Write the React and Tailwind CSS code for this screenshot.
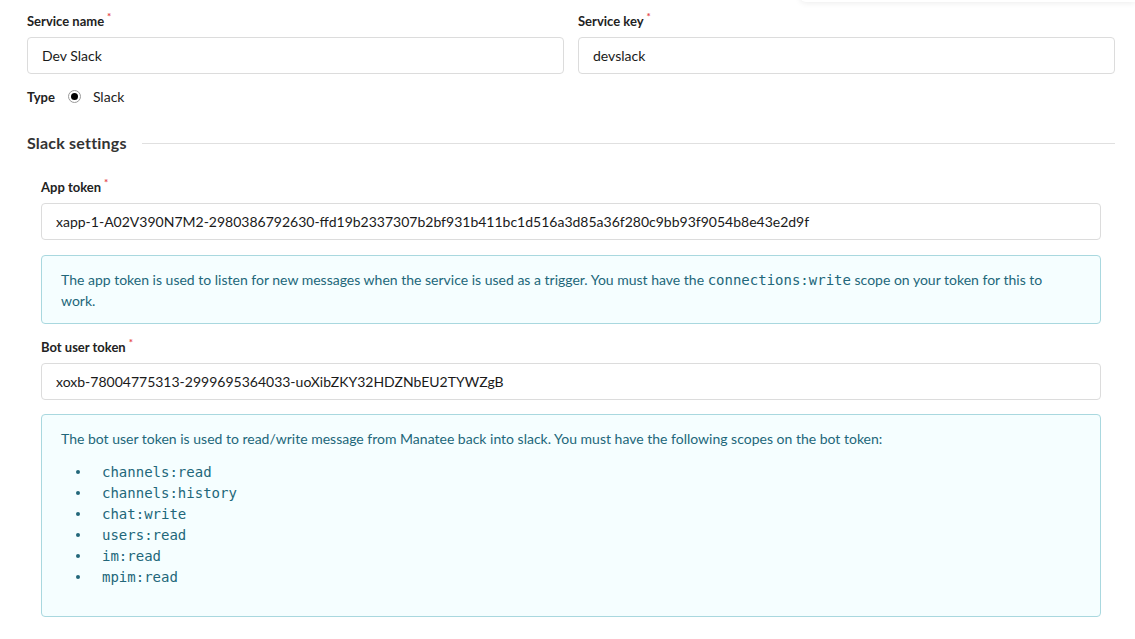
const Label = ({ children }) => (
  <label className="flex items-start text-[13px] font-bold text-[#222] leading-4 mb-[8px]">
    {children}
    <span className="text-[#e5484d] text-[10px] leading-none ml-[3px] -mt-[2px]">*</span>
  </label>
);

const TextInput = ({ value }) => (
  <input
    type="text"
    readOnly
    value={value}
    className="w-full h-[37px] px-[14px] bg-white border border-[#dcdcdc] rounded-[4px] text-[14px] text-[#1a1a1a] outline-none"
  />
);

const Code = ({ children }) => (
  <code className="font-['DejaVu_Sans_Mono',monospace] text-[14px] leading-none">{children}</code>
);

const scopes = ['channels:read', 'channels:history', 'chat:write', 'users:read', 'im:read', 'mpim:read'];

export default function App() {
  return (
    <div className="relative min-h-screen bg-white font-['Lato',sans-serif] overflow-hidden">
      {/* edge of a panel above the viewport */}
      <div className="absolute -top-[40px] right-0 w-[335px] h-[42px] bg-white shadow-[0_1px_6px_rgba(0,0,0,0.08)] rounded-bl-md"></div>

      <div className="px-[27px] pr-[20px] pt-[13px]">
        <div className="grid grid-cols-2 gap-[14px]">
          <div>
            <Label>Service name</Label>
            <TextInput value="Dev Slack" />
          </div>
          <div>
            <Label>Service key</Label>
            <TextInput value="devslack" />
          </div>
        </div>

        <div className="flex items-center mt-[12px] h-[20px]">
          <span className="text-[13px] font-bold text-[#222] mt-[4px]">Type</span>
          <span className="ml-[13px] w-[13px] h-[13px] rounded-full border border-[#9a9a9a] flex items-center justify-center">
            <span className="w-[7px] h-[7px] rounded-full bg-black"></span>
          </span>
          <span className="ml-[12px] text-[14px] text-[#222]">Slack</span>
        </div>

        <div className="flex items-center mt-[25px] gap-[15px]">
          <h3 className="text-[16px] font-bold text-[#333] tracking-[0.2px]">Slack settings</h3>
          <div className="flex-1 h-px bg-[#e0e0e0]"></div>
        </div>

        <div className="px-[14px] mt-[24px]">
          <Label>App token</Label>
          <TextInput value="xapp-1-A02V390N7M2-2980386792630-ffd19b2337307b2bf931b411bc1d516a3d85a36f280c9bb93f9054b8e43e2d9f" />

          <div className="mt-[15px] border border-[#a9d8df] bg-[#f5feff] rounded-[4px] pl-[19px] pr-[30px] pt-[13px] pb-[12px] text-[14px] leading-[21px] text-[#22677a]">
            The app token is used to listen for new messages when the service is used as a trigger. You must have the <Code>connections:write</Code> scope on your token for this to work.
          </div>

          <div className="mt-[15px]">
            <Label>Bot user token</Label>
            <TextInput value="xoxb-78004775313-2999695364033-uoXibZKY32HDZNbEU2TYWZgB" />
          </div>

          <div className="mt-[14px] border border-[#a9d8df] bg-[#f5feff] rounded-[4px] pl-[19px] pr-[30px] pt-[13px] pb-[29px] text-[14px] leading-[21px] text-[#22677a]">
            <p>The bot user token is used to read/write message from Manatee back into slack. You must have the following scopes on the bot token:</p>
            <ul className="mt-[12px]">
              {scopes.map((s) => (
                <li key={s} className="flex items-center h-[21px]">
                  <span className="ml-[15px] w-[4px] h-[4px] rounded-full bg-[#22677a]"></span>
                  <span className="ml-[22px]"><Code>{s}</Code></span>
                </li>
              ))}
            </ul>
          </div>
        </div>
      </div>
    </div>
  );
}
